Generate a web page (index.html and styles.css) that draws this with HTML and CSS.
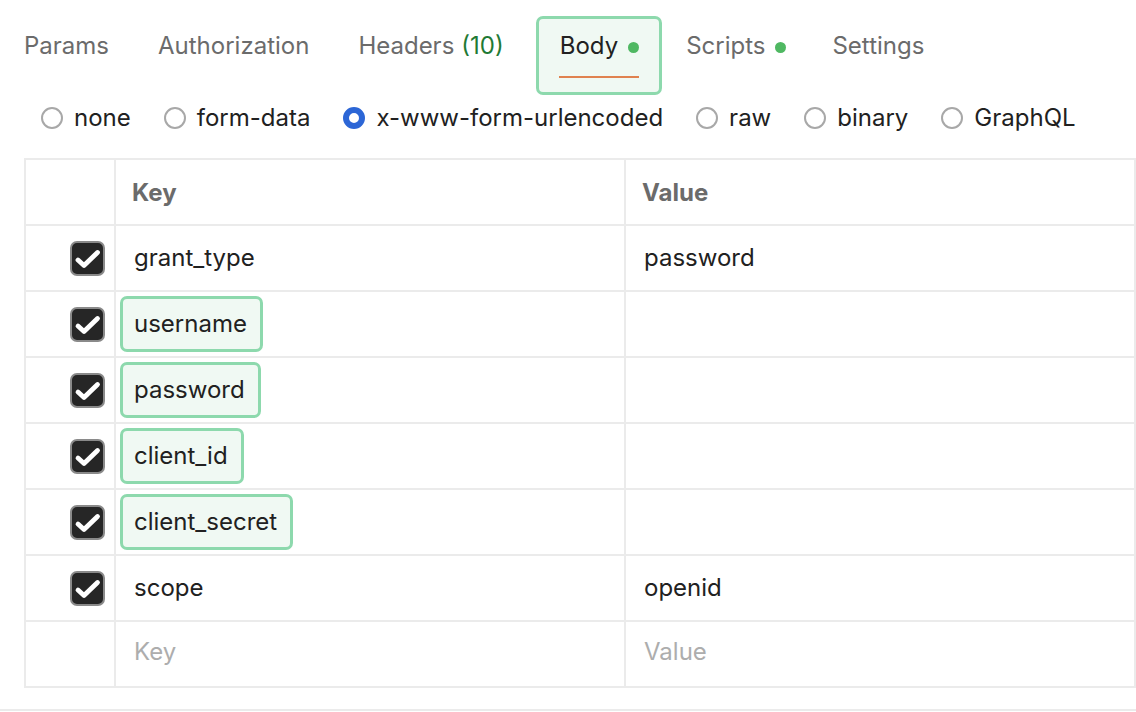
FILE: index.html
```html
<!DOCTYPE html>
<html>
<head>
<meta charset="utf-8">
<link rel="stylesheet" href="styles.css">
</head>
<body>
<div class="page">
  <nav class="tabs">
    <div class="tab"><span class="tab-label">Params</span><span class="tab-line"></span></div>
    <div class="tab"><span class="tab-label">Authorization</span><span class="tab-line"></span></div>
    <div class="tab"><span class="tab-label">Headers <span class="count">(10)</span></span><span class="tab-line"></span></div>
    <div class="tab tab-active"><span class="tab-label">Body<span class="dot"></span></span><span class="tab-line"></span></div>
    <div class="tab tab-scripts"><span class="tab-label">Scripts<span class="dot"></span></span><span class="tab-line"></span></div>
    <div class="tab tab-settings"><span class="tab-label">Settings</span><span class="tab-line"></span></div>
  </nav>

  <div class="radios">
    <label class="radio"><span class="circle"></span>none</label>
    <label class="radio"><span class="circle"></span>form-data</label>
    <label class="radio"><span class="circle circle-on"></span>x-www-form-urlencoded</label>
    <label class="radio"><span class="circle"></span>raw</label>
    <label class="radio"><span class="circle"></span>binary</label>
    <label class="radio"><span class="circle"></span>GraphQL</label>
  </div>

  <div class="grid">
    <div class="cell"></div>
    <div class="cell head">Key</div>
    <div class="cell head">Value</div>

    <div class="cell check-cell"><span class="check"><svg viewBox="0 0 31 31" width="31" height="31"><path d="M6 17 L12 22.5 L25.5 9.5" fill="none" stroke="#fff" stroke-width="4.8" stroke-linecap="round" stroke-linejoin="round"/></svg></span></div>
    <div class="cell key">grant_type</div>
    <div class="cell val">password</div>

    <div class="cell check-cell"><span class="check"><svg viewBox="0 0 31 31" width="31" height="31"><path d="M6 17 L12 22.5 L25.5 9.5" fill="none" stroke="#fff" stroke-width="4.8" stroke-linecap="round" stroke-linejoin="round"/></svg></span></div>
    <div class="cell key-hl"><span class="hl">username</span></div>
    <div class="cell val"></div>

    <div class="cell check-cell"><span class="check"><svg viewBox="0 0 31 31" width="31" height="31"><path d="M6 17 L12 22.5 L25.5 9.5" fill="none" stroke="#fff" stroke-width="4.8" stroke-linecap="round" stroke-linejoin="round"/></svg></span></div>
    <div class="cell key-hl"><span class="hl">password</span></div>
    <div class="cell val"></div>

    <div class="cell check-cell"><span class="check"><svg viewBox="0 0 31 31" width="31" height="31"><path d="M6 17 L12 22.5 L25.5 9.5" fill="none" stroke="#fff" stroke-width="4.8" stroke-linecap="round" stroke-linejoin="round"/></svg></span></div>
    <div class="cell key-hl"><span class="hl">client_id</span></div>
    <div class="cell val"></div>

    <div class="cell check-cell"><span class="check"><svg viewBox="0 0 31 31" width="31" height="31"><path d="M6 17 L12 22.5 L25.5 9.5" fill="none" stroke="#fff" stroke-width="4.8" stroke-linecap="round" stroke-linejoin="round"/></svg></span></div>
    <div class="cell key-hl"><span class="hl">client_secret</span></div>
    <div class="cell val"></div>

    <div class="cell check-cell"><span class="check"><svg viewBox="0 0 31 31" width="31" height="31"><path d="M6 17 L12 22.5 L25.5 9.5" fill="none" stroke="#fff" stroke-width="4.8" stroke-linecap="round" stroke-linejoin="round"/></svg></span></div>
    <div class="cell key">scope</div>
    <div class="cell val">openid</div>

    <div class="cell"></div>
    <div class="cell key placeholder">Key</div>
    <div class="cell val placeholder">Value</div>
  </div>

  <div class="rule"></div>
</div>
</body>
</html>
```

FILE: styles.css
```css
* { box-sizing: border-box; }

html, body {
  margin: 0;
  padding: 0;
  background: #ffffff;
  overflow: hidden;
}

body {
  font-family: Inter, "Noto Sans", sans-serif;
  font-size: 24px;
  color: #212121;
}

.page {
  width: 1136px;
  padding-top: 16px;
}

/* Tabs */
.tabs {
  display: flex;
  align-items: flex-start;
  gap: 2px;
}

.tab {
  display: flex;
  flex-direction: column;
  padding: 11px 20px 14px 21px;
  border: 3px solid transparent;
  border-radius: 7px;
  color: #6b6b6b;
}

.tab-label {
  display: flex;
  align-items: center;
  line-height: 32px;
  white-space: nowrap;
}

.count {
  color: #1f7a35;
  margin-left: 7px;
}

.dot {
  width: 11px;
  height: 11px;
  border-radius: 50%;
  background: #4fb862;
  margin-left: 10px;
  margin-top: 2px;
}

.tab-line {
  height: 2px;
  margin-top: 14px;
  background: transparent;
}

.tab-active {
  margin-left: 7px;
  border-color: #8dd9ad;
  background: #f0f9f3;
  color: #212121;
}

.tab-active .tab-line {
  background: #e0824f;
  margin-left: -1px;
}

.tab-scripts {
  margin-left: -2px;
}

.tab-settings {
  margin-left: -3px;
}

/* Radios */
.radios {
  display: flex;
  align-items: center;
  gap: 33px;
  padding-left: 41px;
  margin-top: 7px;
  height: 32px;
}

.radio {
  display: flex;
  align-items: center;
  gap: 11px;
  line-height: 32px;
  color: #212121;
  white-space: nowrap;
}

.circle {
  width: 22px;
  height: 22px;
  border-radius: 50%;
  border: 2px solid #a8a8a8;
  background: #fff;
}

.circle-on {
  border: 6px solid #2c66d6;
}

/* Table */
.grid {
  margin-top: 24px;
  margin-left: 24px;
  display: grid;
  grid-template-columns: 88px 508px 508px;
  grid-auto-rows: 64px;
  gap: 2px;
  padding: 2px;
  background: #ebebeb;
  width: 1112px;
}

.cell {
  background: #fff;
  display: flex;
  align-items: center;
}

.head {
  font-weight: 700;
  color: #6b6b6b;
  padding-left: 16px;
}

.key, .val {
  padding-left: 18px;
  padding-bottom: 1px;
}

.key-hl {
  padding-left: 4px;
}

.hl {
  display: flex;
  align-items: center;
  height: 56px;
  padding: 0 13px 1px 11px;
  border: 3px solid #8dd9ad;
  border-radius: 7px;
  background: #f0f9f3;
  color: #212121;
}

.placeholder {
  color: #adadad;
  padding-bottom: 6px;
}

.check-cell {
  justify-content: flex-end;
  padding-right: 9px;
}

.check {
  width: 35px;
  height: 35px;
  border-radius: 7px;
  background: #262626;
  border: 2px solid #8a8a8a;
  display: flex;
  align-items: center;
  justify-content: center;
}

.check svg {
  display: block;
}

.rule {
  margin-top: 21px;
  height: 2px;
  background: #ebebeb;
  width: 1136px;
}
```
